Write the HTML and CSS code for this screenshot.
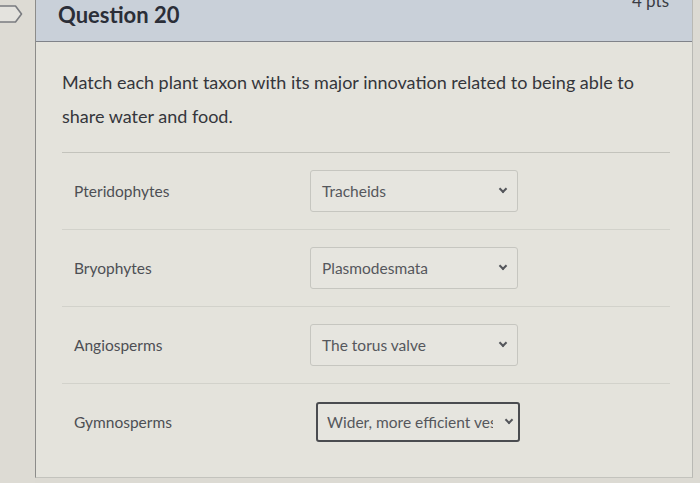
FILE: index.html
```html
<!DOCTYPE html>
<html>
<head>
<meta charset="utf-8">
<link rel="stylesheet" href="styles.css">
</head>
<body>
<div class="page">
  <div class="gutter">
    <svg class="flag" width="24" height="22" viewBox="0 0 24 22">
      <path d="M-2 3 H15.5 L21.5 11 L15.5 19 H-2" fill="#e4e3de" stroke="#7a7c80" stroke-width="1.6" stroke-linejoin="round"/>
    </svg>
  </div>
  <div class="card">
    <div class="header">
      <span class="title">Question 20</span>
      <span class="pts">4 pts</span>
    </div>
    <div class="body">
      <p class="question">Match each plant taxon with its major innovation related to being able to share water and food.</p>
      <div class="rows">
        <div class="row">
          <span class="label">Pteridophytes</span>
          <div class="select"><span>Tracheids</span><span class="chev"></span></div>
        </div>
        <div class="row">
          <span class="label">Bryophytes</span>
          <div class="select"><span>Plasmodesmata</span><span class="chev"></span></div>
        </div>
        <div class="row">
          <span class="label">Angiosperms</span>
          <div class="select"><span>The torus valve</span><span class="chev"></span></div>
        </div>
        <div class="row">
          <span class="label">Gymnosperms</span>
          <div class="select focused"><span class="clip">Wider, more efficient vessels</span><span class="chev"></span></div>
        </div>
      </div>
    </div>
  </div>
</div>
</body>
</html>
```
FILE: styles.css
```css
html, body {
  margin: 0;
  padding: 0;
  background: #dcdad3;
  font-family: Lato, "Open Sans", sans-serif;
}
.page {
  display: flex;
  width: 700px;
  height: 483px;
  overflow: hidden;
}
.gutter {
  width: 35px;
  flex: none;
  background: #dddbd4;
}
.flag {
  display: block;
  margin-top: 3px;
}
.card {
  width: 656px;
  flex: none;
  border-left: 1px solid #8c8c8a;
  border-right: 1px solid #b9b9b4;
  border-bottom: 1px solid #c3c3bd;
  height: 477px;
  background: #e4e3dc;
  display: flex;
  flex-direction: column;
}
.header {
  height: 41px;
  background: #c9d0d9;
  border-bottom: 1px solid #80838a;
  display: flex;
  justify-content: space-between;
  align-items: flex-start;
  overflow: hidden;
  padding: 0 23px 0 22px;
}
.title {
  font-weight: 700;
  font-size: 22px;
  line-height: 30px;
  color: #2b2e38;
}
.pts {
  font-size: 17px;
  line-height: 17px;
  margin-top: -8px;
  color: #3a3c44;
}
.body {
  padding: 0 22px 0 26px;
}
.question {
  margin: 23px 0 0 0;
  font-size: 18px;
  line-height: 34px;
  color: #34363b;
  width: 590px;
}
.rows {
  margin-top: 19px;
  border-top: 1px solid #c3c3bc;
}
.row {
  height: 76px;
  border-bottom: 1px solid #d2d2cb;
  display: flex;
  align-items: center;
}
.row:last-child {
  border-bottom: none;
}
.label {
  width: 236px;
  padding-left: 12px;
  font-size: 15.5px;
  color: #4d4f54;
}
.select {
  width: 208px;
  height: 42px;
  box-sizing: border-box;
  border: 1px solid #c6c6c0;
  border-radius: 3px;
  background: #e6e5df;
  display: flex;
  align-items: center;
  justify-content: space-between;
  padding: 0 11px 0 11px;
  font-size: 15.5px;
  color: #55575c;
}
.select.focused {
  height: 40px;
  border: 2px solid #4a4c50;
  padding: 0 6px 0 9px;
  margin-left: 6px;
  width: 204px;
}
.clip {
  width: 166px;
  overflow: hidden;
  white-space: nowrap;
}
.chev {
  width: 4px;
  height: 4px;
  border-right: 2.2px solid #54565b;
  border-bottom: 2.2px solid #54565b;
  transform: rotate(45deg);
  margin-top: -4px;
}
```
